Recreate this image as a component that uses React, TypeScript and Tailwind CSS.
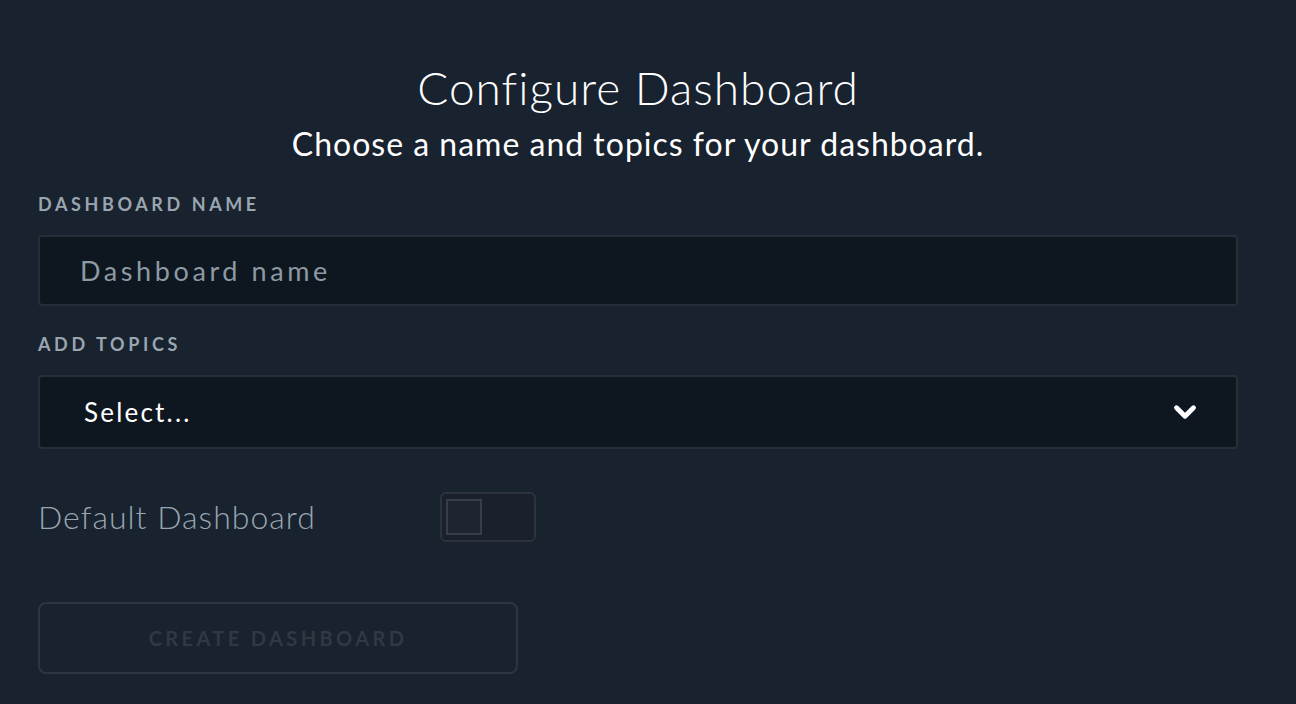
import { ChevronDown } from "lucide-react";

export default function App() {
  return (
    <div
      className="min-h-[704px] w-full bg-[#19222f] text-white"
      style={{ fontFamily: "Lato, 'Noto Sans', sans-serif" }}
    >
      <div className="ml-[38px] w-[1200px] pt-[58px]">
        <div className="text-center">
          <h1 className="text-[46px] font-light leading-[60px] tracking-[1px]">
            Configure Dashboard
          </h1>
          <p className="mt-[6px] text-[32px] leading-[40px] tracking-[1px]">
            Choose a name and topics for your dashboard.
          </p>
        </div>

        {/* Name */}
        <label className="mt-[28px] block text-[18px] font-bold leading-[24px] tracking-[3.6px] text-[#9aa6af]">
          DASHBOARD NAME
        </label>
        <input
          placeholder="Dashboard name"
          className="mt-[19px] block h-[71px] w-full rounded-[4px] border-2 border-[#262f39] bg-[#0e1720] px-[40px] text-[27px] tracking-[3.6px] text-white outline-none placeholder:text-[#8d9aa3]"
        />

        {/* Topics */}
        <label className="mt-[26px] block text-[18px] font-bold leading-[24px] tracking-[3.6px] text-[#9aa6af]">
          ADD TOPICS
        </label>
        <div className="mt-[19px] flex h-[74px] w-full items-center justify-between rounded-[4px] border-2 border-[#262f39] bg-[#0e1720] pl-[44px] pr-[34px]">
          <span className="text-[26px] tracking-[2.2px] text-white">Select...</span>
          <ChevronDown className="h-[34px] w-[34px] text-white" strokeWidth={3.4} />
        </div>

        {/* Default toggle */}
        <div className="mt-[43px] flex items-center">
          <span className="w-[402px] text-[32px] font-light leading-[50px] tracking-[1px] text-[#9aa6af]">
            Default Dashboard
          </span>
          <button className="flex h-[50px] w-[96px] items-center rounded-[6px] border-2 border-[#2c333d] bg-[#1b212c] p-[4px]">
            <span className="block h-[36px] w-[36px] border-2 border-[#373e49] bg-[#1f2530]" />
          </button>
        </div>

        {/* Create */}
        <button
          disabled
          className="mt-[60px] flex h-[72px] w-[480px] items-center justify-center rounded-[8px] border-2 border-[#2c3640] text-[20px] font-bold tracking-[3.4px] text-[#2e3944]"
        >
          CREATE DASHBOARD
        </button>
      </div>
    </div>
  );
}
